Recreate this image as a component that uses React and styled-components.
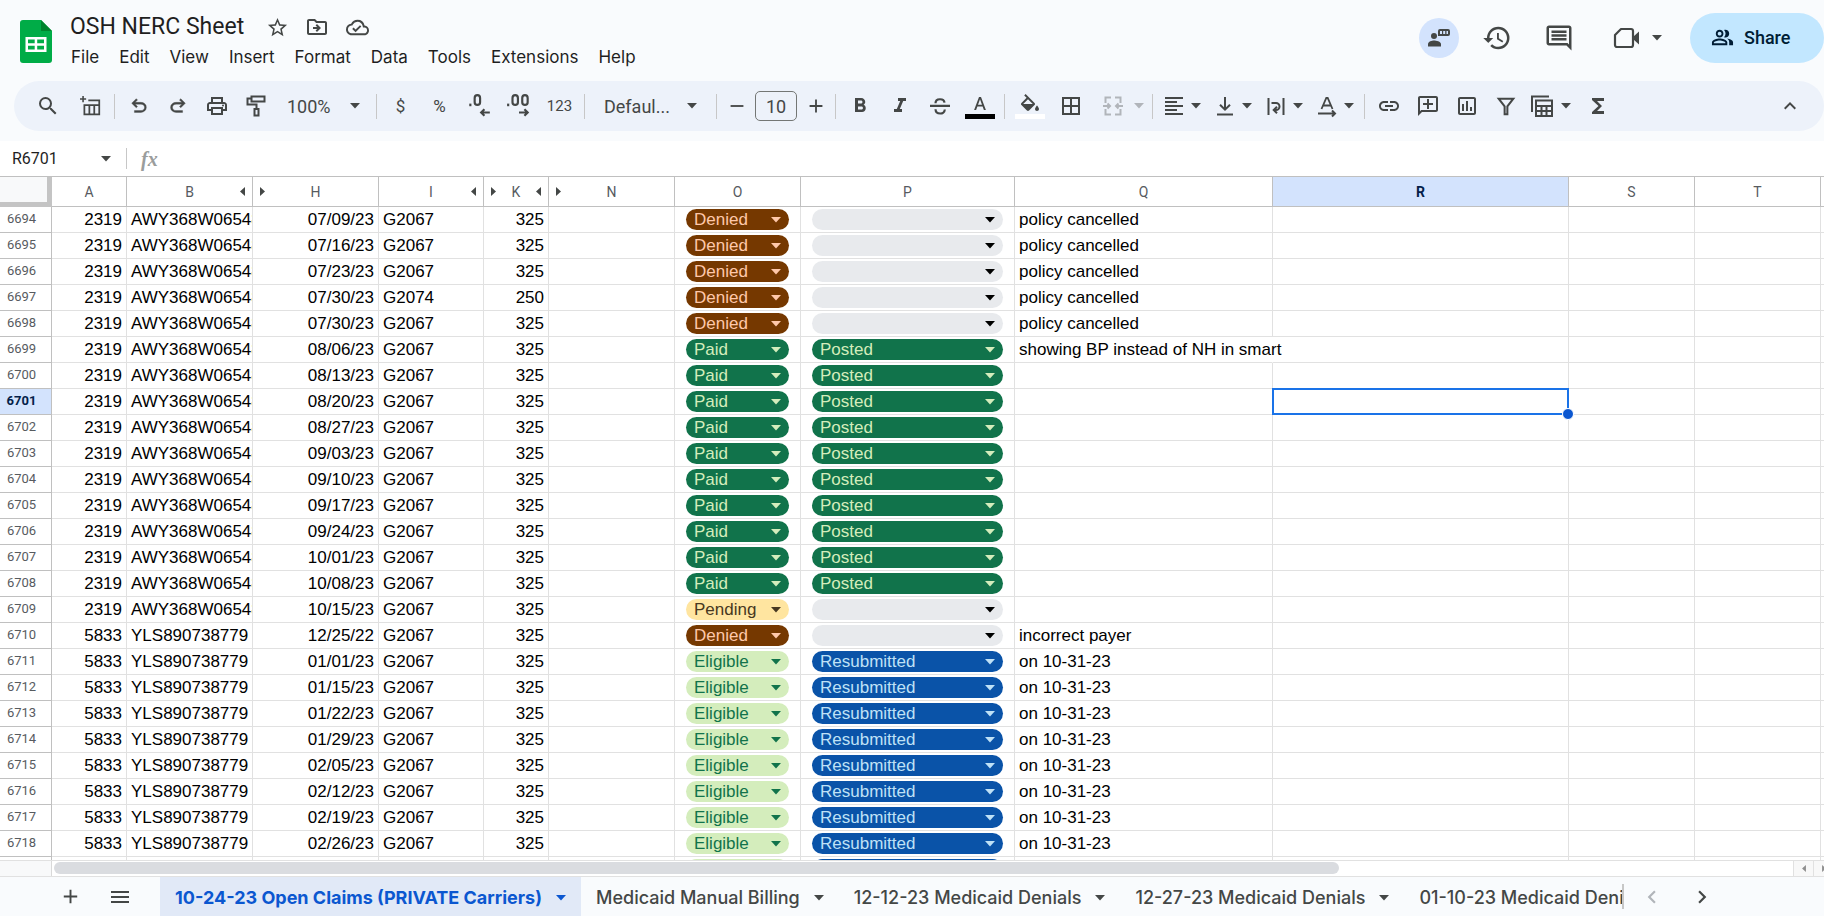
import React from "react";
import styled, { createGlobalStyle } from "styled-components";
import {
  MdStarBorder, MdOutlineDriveFileMove, MdOutlineCloudDone, MdHistory, MdOutlineComment,
  MdSearch, MdOutlinePrint, MdFormatBold, MdFormatItalic, MdBorderAll,
  MdFormatAlignLeft, MdLink, MdOutlineAddComment,
  MdOutlineInsertChart, MdFunctions, MdKeyboardArrowUp, MdAdd, MdRemove, MdMenu,
  MdChevronLeft, MdChevronRight, MdOutlinePeopleAlt,
} from "react-icons/md";

const ui = `Roboto, "Liberation Sans", sans-serif`;
const labelFont = `Inter, Roboto, sans-serif`;
const cellFont = `"Liberation Sans", Arial, sans-serif`;

const GlobalStyle = createGlobalStyle`
  *, *::before, *::after { box-sizing: border-box; }
  body { margin: 0; background: #f9fbfd; font-family: ${ui}; color: #1f1f1f; overflow: hidden; }
  button, input, select { font: inherit; color: inherit; border: 0; background: none; padding: 0; margin: 0; }
  button, select { cursor: pointer; }
  select { appearance: none; }
  svg { display: block; flex: none; }
`;

const Page = styled.div`
  display: flex;
  flex-direction: column;
  height: 100vh;
`;

/* ---------- document header ---------- */

const Header = styled.header`
  display: flex;
  align-items: flex-start;
  padding: 12px 0 0 20px;
  height: 81px;
`;
const LogoLink = styled.a`
  display: block;
  margin-top: 8px;
`;
const TitleArea = styled.div`
  flex: 1;
  min-width: 0;
  margin-left: 9px;
`;
const TitleRow = styled.div`
  display: flex;
  align-items: center;
  height: 30px;
  padding-left: 9px;
`;
const Title = styled.h1`
  margin: 0 13px 0 0;
  font-size: 23px;
  line-height: 28px;
  font-weight: 400;
  white-space: nowrap;
`;
const TitleButton = styled.button`
  display: grid;
  place-items: center;
  width: 40px;
  height: 30px;
  color: #444746;
`;
const MenuBar = styled.nav`
  display: flex;
  height: 30px;
`;
const MenuItem = styled.button`
  padding: 0 10px;
  font-family: ${labelFont};
  font-size: 17px;
  line-height: 30px;
`;
const Actions = styled.div`
  display: flex;
  align-items: center;
  height: 52px;
  color: #444746;
`;
const RoundButton = styled.button`
  display: grid;
  place-items: center;
  width: 40px;
  height: 40px;
  margin-right: ${(p) => p.$gap || 0}px;
  border-radius: 20px;
  background: ${(p) => (p.$active ? "#d3e3fd" : "transparent")};
`;
const CallButton = styled.button`
  display: flex;
  align-items: center;
  gap: 12px;
  height: 40px;
  margin-right: 28px;
`;
const ShareButton = styled.button`
  display: flex;
  align-items: center;
  gap: 10px;
  width: 134px;
  height: 50px;
  padding: 0 0 2px 21px;
  border-radius: 25px;
  background: #c2e7ff;
  color: #001d35;
  font-size: 18px;
  font-weight: 500;
`;

/* ---------- toolbar ---------- */

const Toolbar = styled.div`
  display: flex;
  align-items: center;
  flex: none;
  height: 50px;
  margin: 0 0 10px 14px;
  padding: 0 15px 0 14px;
  border-radius: 25px;
  background: #edf2fa;
  color: #444746;
`;
const Tool = styled.button`
  display: grid;
  place-items: center;
  flex: none;
  width: ${(p) => p.$w || 39}px;
  height: 38px;
  margin-right: ${(p) => p.$gap || 0}px;
  font-size: ${(p) => p.$size || 17}px;
`;
const Split = styled.button`
  display: flex;
  align-items: center;
  flex: none;
  gap: ${(p) => p.$gap || 5}px;
  width: ${(p) => p.$w || 51}px;
  height: 38px;
  padding-left: ${(p) => p.$start || 5}px;
  color: ${(p) => (p.$muted ? "#b1b5ba" : "inherit")};
`;
const Divider = styled.span`
  flex: none;
  width: 1px;
  height: ${(p) => p.$h || 25}px;
  margin: 0 ${(p) => p.$gap || 4}px;
  background: #c7c7c7;
`;
const SelectBox = styled.label`
  display: flex;
  align-items: center;
  flex: none;
  width: ${(p) => p.$w}px;
  padding: 0 ${(p) => p.$pad}px;
  font-size: 18px;
  select { flex: 1; min-width: 0; height: 38px; }
`;
const SizeInput = styled.input`
  flex: none;
  width: 42px;
  height: 30px;
  margin: 0 3px;
  border: 1px solid #747775;
  border-radius: 5px;
  text-align: center;
  font-size: 18px;
`;
const Swatched = styled.span`
  display: flex;
  flex-direction: column;
  align-items: center;
  gap: 2px;
  width: 30px;
  &::after {
    content: "";
    width: 30px;
    height: 5px;
    background: ${(p) => p.$color};
  }
`;
const Spacer = styled.span`
  flex: 1;
`;
const FlipX = styled.span`
  transform: scaleX(-1);
`;

/* ---------- formula bar ---------- */

const FormulaBar = styled.div`
  display: flex;
  align-items: center;
  flex: none;
  height: 35px;
  background: #fff;
`;
const NameBox = styled.input`
  width: 88px;
  padding-left: 12px;
  font-size: 16px;
`;
const NameMenu = styled.button`
  display: grid;
  place-items: center;
  width: 36px;
  height: 30px;
  padding-right: 1px;
  color: #444746;
`;
const FxMark = styled.span`
  width: 30px;
  margin-left: 12px;
  font: italic bold 20px/24px "Liberation Serif", serif;
  color: #9a9d9c;
`;
const FormulaInput = styled.input`
  flex: 1;
  height: 30px;
`;

/* ---------- grid ---------- */

const GridArea = styled.main`
  flex: 1;
  min-height: 0;
  overflow: hidden;
  border-top: 1px solid #c0c0c0;
  border-bottom: 1px solid #e1e1e1;
  background: #fff;
`;
const Sheet = styled.table`
  table-layout: fixed;
  width: 1950px;
  border-collapse: separate;
  border-spacing: 0;
`;
const ColHead = styled.th`
  height: 30px;
  padding: 0 7px;
  border-right: 1px solid #c0c0c0;
  border-bottom: 1px solid #c0c0c0;
  background: ${(p) => (p.$active ? "#d3e3fd" : "#fff")};
  color: ${(p) => (p.$active ? "#041e49" : "#575b5f")};
  font-size: 14px;
  font-weight: ${(p) => (p.$active ? 700 : 400)};
`;
const HeadInner = styled.span`
  display: grid;
  grid-template-columns: 1fr auto 1fr;
  align-items: center;
  & > :last-child { justify-self: end; }
`;
const Corner = styled.td`
  height: 30px;
  padding: 0;
  background: #f8f9fa;
  border-right: 5px solid #c4c4c4;
  border-bottom: 5px solid #c4c4c4;
`;
const RowHead = styled.th`
  height: 26px;
  padding: 0 8px 2px 0;
  border-right: 1px solid #c0c0c0;
  border-bottom: 1px solid #c0c0c0;
  background: ${(p) => (p.$active ? "#d3e3fd" : "#fff")};
  color: ${(p) => (p.$active ? "#041e49" : "#575b5f")};
  font-size: 13px;
  line-height: 16px;
  font-weight: ${(p) => (p.$active ? 700 : 400)};
`;
const Cell = styled.td`
  position: relative;
  height: 26px;
  padding: 1px 4px;
  border-right: 1px solid ${(p) => (p.$spill ? "transparent" : "#e1e1e1")};
  border-bottom: 1px solid #e1e1e1;
  overflow: ${(p) => (p.$spill || p.$open ? "visible" : "hidden")};
  color: #000;
  font-family: ${cellFont};
  font-size: 17px;
  line-height: 22px;
  text-align: ${(p) => (p.$right ? "right" : "left")};
  white-space: nowrap;
`;
const ChipCell = styled(Cell)`
  padding: 2px 11px;
`;
const Chip = styled.label`
  display: flex;
  align-items: center;
  height: 21px;
  padding: 0 8px;
  border-radius: 11px;
  background: ${(p) => p.$bg};
  color: ${(p) => p.$fg};
  select { flex: 1; min-width: 0; height: 21px; line-height: 21px; font-size: 17px; }
`;
const Selection = styled.span`
  position: absolute;
  inset: -1px;
  border: 2px solid #1a73e8;
  z-index: 1;
  &::after {
    content: "";
    position: absolute;
    right: -7px;
    bottom: -7px;
    width: 12px;
    height: 12px;
    border: 1px solid #fff;
    border-radius: 6px;
    background: #0b57d0;
  }
`;

/* ---------- scroll bar and sheet tabs ---------- */

const ScrollRow = styled.div`
  display: flex;
  flex: none;
  height: 16px;
  overflow: hidden;
  border-bottom: 1px solid #e1e1e1;
  background: #fff;
`;
const ScrollStub = styled.span`
  width: 52px;
  border-right: 1px solid #d9d9d9;
  background: #f8f9fa;
`;
const Track = styled.div`
  flex: 1;
  padding: 1px 2px;
`;
const Thumb = styled.div`
  width: 74%;
  height: 12px;
  border-radius: 6px;
  background: #dadce0;
`;
const ScrollButtons = styled.div`
  display: flex;
  margin-right: -9px;
`;
const ScrollButton = styled.button`
  display: grid;
  place-items: center;
  width: 20px;
  border-left: 1px solid #e1e1e1;
  background: #f8f8f8;
`;
const TabBar = styled.footer`
  display: flex;
  align-items: center;
  flex: none;
  height: 39px;
  padding-left: 45px;
  color: #444746;
`;
const BarButton = styled.button`
  display: grid;
  place-items: center;
  flex: none;
  width: 50px;
  height: 38px;
  color: ${(p) => (p.$muted ? "#b1b5ba" : "inherit")};
`;
const Tabs = styled.div`
  display: flex;
  flex: 1;
  min-width: 0;
  height: 39px;
  margin-left: 15px;
  overflow: hidden;
`;
const Tab = styled.button`
  display: flex;
  align-items: center;
  flex: none;
  gap: 14px;
  height: 39px;
  padding: 2px 15px 0;
  background: ${(p) => (p.$active ? "#e1e9f7" : "transparent")};
  color: ${(p) => (p.$active ? "#0b57d0" : "inherit")};
  font-family: ${labelFont};
  font-size: 18px;
  font-weight: ${(p) => (p.$active ? 700 : 500)};
  white-space: nowrap;
`;
const TabEdge = styled.span`
  width: 2px;
  height: 25px;
  background: #c7c7c7;
`;
const PagerArea = styled.div`
  display: flex;
  width: 200px;
  padding-left: 3px;
`;

/* ---------- drawings ---------- */

const Caret = () => (
  <svg width="10" height="6" viewBox="0 0 10 6" fill="currentColor" aria-hidden="true"><path d="M0 0h10L5 5.500z" /></svg>
);
const SideArrow = ({ left, w = 5, h = 9, fill = "#444746" }) => (
  <svg width={w} height={h} viewBox="0 0 5 9" fill={fill} aria-hidden="true">
    <path d={left ? "M5 0v9L0 4.500z" : "M0 0v9l5-4.500z"} />
  </svg>
);
const Svg = ({ s = 24, h = s, box = "0 0 24 24", children }) => (
  <svg width={s} height={h} viewBox={box} fill="currentColor" aria-hidden="true">{children}</svg>
);
const Line = ({ s = 24, w = 2, children }) => (
  <svg width={s} height={s} viewBox="0 0 24 24" fill="none" stroke="currentColor" strokeWidth={w} aria-hidden="true">{children}</svg>
);
const Logo = () => (
  <svg width="32" height="43" viewBox="0 0 32 43" aria-hidden="true">
    <path d="M3 0h18l11 11v29a3 3 0 0 1-3 3H3a3 3 0 0 1-3-3V3a3 3 0 0 1 3-3z" fill="#00ac47" />
    <path d="M21 0l11 11H21z" fill="#00832d" />
    <path d="M5.500 17v15h21V17zm2.500 2.500h6.700v3.700H8zm9.200 0H24v3.700h-6.800zM8 25.700h6.700v3.800H8zm9.200 0H24v3.800h-6.800z" fill="#fff" fillRule="evenodd" />
  </svg>
);
const UndoIcon = () => (
  <Svg s={22} box="0 -960 960 960"><path d="M280-200v-80h284q63 0 109.500-40T720-420q0-60-46.500-100T564-560H312l104 104-56 56-200-200 200-200 56 56-104 104h252q97 0 169.500 63T800-420q0 94-72.500 157T564-200H280Z" stroke="currentColor" strokeWidth="16" /></Svg>
);
const RedoIcon = () => (
  <Svg s={22} box="0 -960 960 960"><path d="M396-200q-97 0-169.500-63T154-420q0-94 72.500-157T396-640h252L544-744l56-56 200 200-200 200-56-56 104-104H396q-63 0-109.500 40T240-420q0 60 46.500 100T396-280h284v80H396Z" stroke="currentColor" strokeWidth="16" /></Svg>
);
const InsertTableIcon = () => (
  <Line s={21} w={2}><path d="M9.500 5H22v16H5V9.500M5 10.500h17M10.700 10.500V21M16.300 10.500V21" /><path d="M3.500 0v7M0 3.500h7" strokeWidth="1.800" /></Line>
);
const PaintIcon = () => (
  <Line s={24}><path d="M7.500 2.500h13v5h-13zM7.500 4.500H3.500v6h9v4.500M10.500 15h4v6.500h-4z" /></Line>
);
const StrikeIcon = () => (
  <Line s={24} w={2.200}><path d="M2 11.800h20M7.500 9.200C7.500 4 16 4 16.500 8.700M7.500 15.200c.3 5.600 9 5.800 9.300.3" /></Line>
);
const DecimalLess = () => (
  <Line s={26} w={2}><rect x="8" y="2" width="5" height="9" rx="2.500" /><path d="M3 11h2" strokeWidth="2.400" /><path d="M22 18h-8M17 15l-3 3 3 3" /></Line>
);
const DecimalMore = () => (
  <Line s={26} w={2}><rect x="6" y="2" width="5" height="9" rx="2.500" /><rect x="15" y="2" width="5" height="9" rx="2.500" /><path d="M1 11h2" strokeWidth="2.400" /><path d="M12 18h8M17 15l3 3-3 3" /></Line>
);
const MergeIcon = () => (
  <Line s={24}><path d="M10 3.500H4.500V9M14 3.500h5.500V9M4.500 15v5.500H10M19.500 15v5.500H14M2 12h7M6.500 9.500L9 12l-2.500 2.500M22 12h-7M17.500 9.500L15 12l2.500 2.500" /></Line>
);
const AlignBottomIcon = () => (
  <Line s={24}><path d="M12 3v12.500M7 10.700l5 5 5-5M4 20.500h16" /></Line>
);
const WrapIcon = () => (
  <Line s={24}><path d="M4.500 4v17M19.500 4v17M7.500 9H12a3.500 3.500 0 0 1 0 7h-1.500M13 12.700L9.700 16l3.300 3.300" /></Line>
);
const RotateIcon = () => (
  <Line s={24}><path d="M6.500 15L11.300 4h1.400l4.800 11M8.500 11.500h7" strokeWidth="1.800" /><path d="M3 19.500h17M17 16.500l3 3-3 3" /></Line>
);
const FilterIcon = () => (
  <Line s={22} w={2.2}><path d="M4 4h16l-6.500 8.500V21h-3v-8.500z" /></Line>
);
const TableViewsIcon = () => (
  <Line s={24}><path d="M2 18V2.500h17" /><path d="M6 6.500h16V22H6zM6 12h16M6 17h16M11.500 12v10M16.500 12v10" /></Line>
);
const BucketIcon = () => (
  <Svg h={18} box="0 0 24 18"><path d="M16.560 8.940L7.620 0 6.210 1.410l2.380 2.380-5.150 5.150c-.59.590-.59 1.540 0 2.120l5.500 5.500c.29.290.68.440 1.060.440s.77-.15 1.060-.44l5.500-5.500c.59-.58.59-1.530 0-2.120zM5.210 10L10 5.210 14.790 10H5.210zM19 11.500s-2 2.170-2 3.500c0 1.100.9 2 2 2s2-.9 2-2c0-1.330-2-3.500-2-3.500z" /></Svg>
);
const ColorAIcon = () => (
  <Svg h={18} box="0 0 24 18"><path d="M11 3h2l4.900 13h-2l-1.300-3.500H9.400L8.100 16h-2zM10 10.800h4L12 5.200z" /></Svg>
);
const PresentIcon = () => (
  <svg width="24" height="20" viewBox="0 0 24 20" fill="#444746" aria-hidden="true">
    <circle cx="7" cy="8" r="3" />
    <path d="M1 18.500v-2.500c0-2.500 4-3.500 6-3.500s7 1 7 3.500v2.500z" />
    <path d="M13 1h8a2 2 0 0 1 2 2v3a2 2 0 0 1-2 2H11V3a2 2 0 0 1 2-2zm0 2v3h2V3zm3.200 0v3h2V3zm3.300 0v3H21V3z" fillRule="evenodd" />
  </svg>
);
const MeetIcon = () => (
  <svg width="27" height="22" viewBox="0 0 27 22" fill="none" aria-hidden="true">
    <path d="M8 2h10a2 2 0 0 1 2 2v14a2 2 0 0 1-2 2H4a2 2 0 0 1-2-2V8z" stroke="#444746" strokeWidth="2.200" strokeLinejoin="round" />
    <path d="M20 10l6-5.500v13L20 12z" fill="#444746" />
  </svg>
);

/* ---------- data ---------- */

const menus = ["File", "Edit", "View", "Insert", "Format", "Data", "Tools", "Extensions", "Help"];

const columns = [
  { id: "A", w: 75 },
  { id: "B", w: 126, left: true },
  { id: "H", w: 126, right: true },
  { id: "I", w: 105, left: true },
  { id: "K", w: 65, left: true, right: true },
  { id: "N", w: 126, right: true },
  { id: "O", w: 126 },
  { id: "P", w: 214 },
  { id: "Q", w: 258 },
  { id: "R", w: 296 },
  { id: "S", w: 126 },
  { id: "T", w: 126 },
  { id: "", w: 129 },
];

const chipColors = {
  Denied: ["#753800", "#ffc8aa"],
  Paid: ["#11734b", "#d4edbc"],
  Posted: ["#11734b", "#d4edbc"],
  Pending: ["#ffe5a0", "#473821"],
  Eligible: ["#d4edbc", "#11734b"],
  Resubmitted: ["#0a53a8", "#bfe1f6"],
  "": ["#e8eaed", "#000000"],
};

const claim = (date, status, follow, note = "", code = "G2067", fee = 325) => ({ date, status, follow, note, code, fee });
const claims = [
  claim("07/09/23", "Denied", "", "policy cancelled"),
  claim("07/16/23", "Denied", "", "policy cancelled"),
  claim("07/23/23", "Denied", "", "policy cancelled"),
  claim("07/30/23", "Denied", "", "policy cancelled", "G2074", 250),
  claim("07/30/23", "Denied", "", "policy cancelled"),
  claim("08/06/23", "Paid", "Posted", "showing BP instead of NH in smart"),
  ...["08/13/23", "08/20/23", "08/27/23", "09/03/23", "09/10/23", "09/17/23", "09/24/23", "10/01/23", "10/08/23"].map((d) => claim(d, "Paid", "Posted")),
  claim("10/15/23", "Pending", ""),
  claim("12/25/22", "Denied", "", "incorrect payer"),
  ...["01/01/23", "01/15/23", "01/22/23", "01/29/23", "02/05/23", "02/12/23", "02/19/23", "02/26/23", "03/05/23"].map((d) => claim(d, "Eligible", "Resubmitted", "on 10-31-23")),
].map((c, i) => ({
  ...c,
  row: 6694 + i,
  client: i < 16 ? 2319 : 5833,
  member: i < 16 ? "AWY368W06548" : "YLS890738779",
}));

const sheetTabs = [
  "10-24-23 Open Claims (PRIVATE Carriers)",
  "Medicaid Manual Billing",
  "12-12-23 Medicaid Denials",
  "12-27-23 Medicaid Denials",
  "01-10-23 Medicaid Denials",
];

/* ---------- parts ---------- */

const StatusChip = ({ value, label }) => {
  const [bg, fg] = chipColors[value];
  return (
    <Chip $bg={bg} $fg={fg}>
      <select aria-label={label} defaultValue={value}><option value={value}>{value}</option></select>
      <Caret />
    </Chip>
  );
};

const ClaimRow = ({ c }) => {
  const active = c.row === 6701;
  return (
    <tr>
      <RowHead scope="row" $active={active}>{c.row}</RowHead>
      <Cell $right>{c.client}</Cell>
      <Cell>{c.member}</Cell>
      <Cell $right>{c.date}</Cell>
      <Cell>{c.code}</Cell>
      <Cell $right>{c.fee}</Cell>
      <Cell />
      <ChipCell><StatusChip value={c.status} label={`Status, row ${c.row}`} /></ChipCell>
      <ChipCell><StatusChip value={c.follow} label={`Follow-up, row ${c.row}`} /></ChipCell>
      <Cell $spill={c.note.length > 30}>{c.note}</Cell>
      <Cell $open={active}>{active && <Selection />}</Cell>
      <Cell /><Cell /><Cell />
    </tr>
  );
};

export default function App() {
  return (
    <Page>
      <GlobalStyle />
      <Header>
        <LogoLink href="#home" aria-label="Sheets home"><Logo /></LogoLink>
        <TitleArea>
          <TitleRow>
            <Title>OSH NERC Sheet</Title>
            <TitleButton aria-label="Star"><MdStarBorder size={23} /></TitleButton>
            <TitleButton aria-label="Move"><MdOutlineDriveFileMove size={24} /></TitleButton>
            <TitleButton aria-label="Saved to Drive"><MdOutlineCloudDone size={23} /></TitleButton>
          </TitleRow>
          <MenuBar>{menus.map((m) => <MenuItem key={m}>{m}</MenuItem>)}</MenuBar>
        </TitleArea>
        <Actions>
          <RoundButton $active $gap={18} aria-label="Present"><PresentIcon /></RoundButton>
          <RoundButton $gap={22} aria-label="History"><MdHistory size={30} /></RoundButton>
          <RoundButton $gap={34} aria-label="Comments"><MdOutlineComment size={30} /></RoundButton>
          <CallButton aria-label="Join a call"><MeetIcon /><Caret /></CallButton>
          <ShareButton><MdOutlinePeopleAlt size={23} />Share</ShareButton>
        </Actions>
      </Header>

      <Toolbar role="toolbar">
        <Tool $gap={4} aria-label="Search"><MdSearch size={24} /></Tool>
        <Tool aria-label="Insert table"><InsertTableIcon /></Tool>
        <Divider />
        <Tool aria-label="Undo"><UndoIcon /></Tool>
        <Tool aria-label="Redo"><RedoIcon /></Tool>
        <Tool aria-label="Print"><MdOutlinePrint size={24} /></Tool>
        <Tool aria-label="Paint format"><PaintIcon /></Tool>
        <SelectBox $w={97} $pad={12}>
          <select aria-label="Zoom"><option>100%</option></select><Caret />
        </SelectBox>
        <Divider />
        <Tool aria-label="Currency">$</Tool>
        <Tool aria-label="Percent">%</Tool>
        <Tool $w={40} aria-label="Decrease decimals"><DecimalLess /></Tool>
        <Tool $w={40} aria-label="Increase decimals"><DecimalMore /></Tool>
        <Tool $w={41} $size={15} aria-label="More formats">123</Tool>
        <Divider />
        <SelectBox $w={123} $pad={15}>
          <select aria-label="Font"><option>Defaul...</option></select><Caret />
        </SelectBox>
        <Divider />
        <Tool $w={31} aria-label="Smaller"><MdRemove size={22} /></Tool>
        <SizeInput aria-label="Font size" defaultValue="10" />
        <Tool $w={31} aria-label="Larger"><MdAdd size={22} /></Tool>
        <Divider />
        <Tool $w={40} aria-label="Bold"><MdFormatBold size={24} /></Tool>
        <Tool $w={40} aria-label="Italic"><MdFormatItalic size={24} /></Tool>
        <Tool $w={40} aria-label="Strikethrough"><StrikeIcon /></Tool>
        <Tool $w={40} aria-label="Text color"><Swatched $color="#000"><ColorAIcon /></Swatched></Tool>
        <Divider />
        <Tool $w={41} aria-label="Fill color"><Swatched $color="#fff"><BucketIcon /></Swatched></Tool>
        <Tool $w={41} aria-label="Borders"><MdBorderAll size={24} /></Tool>
        <Split $w={57} $gap={9} $start={10} $muted aria-label="Merge cells"><MergeIcon /><Caret /></Split>
        <Divider />
        <Split aria-label="Horizontal align"><MdFormatAlignLeft size={24} /><Caret /></Split>
        <Split aria-label="Vertical align"><AlignBottomIcon /><Caret /></Split>
        <Split aria-label="Wrapping"><WrapIcon /><Caret /></Split>
        <Split $w={50} aria-label="Rotation"><RotateIcon /><Caret /></Split>
        <Divider />
        <Tool aria-label="Link"><MdLink size={24} /></Tool>
        <Tool aria-label="Comment"><FlipX><MdOutlineAddComment size={24} /></FlipX></Tool>
        <Tool aria-label="Chart"><MdOutlineInsertChart size={24} /></Tool>
        <Tool aria-label="Filter"><FilterIcon /></Tool>
        <Split $w={53} $gap={7} aria-label="Filter views"><TableViewsIcon /><Caret /></Split>
        <Tool aria-label="Functions"><MdFunctions size={24} /></Tool>
        <Spacer />
        <Tool aria-label="Hide menus"><MdKeyboardArrowUp size={24} /></Tool>
      </Toolbar>

      <FormulaBar>
        <NameBox aria-label="Name box" defaultValue="R6701" />
        <NameMenu aria-label="Named ranges"><Caret /></NameMenu>
        <Divider $h={21} $gap={2} />
        <FxMark>fx</FxMark>
        <FormulaInput aria-label="Formula" />
      </FormulaBar>

      <GridArea>
        <Sheet>
          <colgroup>
            <col style={{ width: 52 }} />
            {columns.map((c) => <col key={c.id} style={{ width: c.w }} />)}
          </colgroup>
          <thead>
            <tr>
              <Corner />
              {columns.map((c) => (
                <ColHead key={c.id} scope="col" $active={c.id === "R"}>
                  <HeadInner>
                    <span>{c.right && <SideArrow />}</span>
                    <span>{c.id}</span>
                    <span>{c.left && <SideArrow left />}</span>
                  </HeadInner>
                </ColHead>
              ))}
            </tr>
          </thead>
          <tbody>{claims.map((c) => <ClaimRow key={c.row} c={c} />)}</tbody>
        </Sheet>
      </GridArea>

      <ScrollRow>
        <ScrollStub />
        <Track><Thumb /></Track>
        <ScrollButtons>
          <ScrollButton aria-label="Scroll left"><SideArrow left w={4} h={7} fill="#8f8f8f" /></ScrollButton>
          <ScrollButton aria-label="Scroll right"><SideArrow w={4} h={7} fill="#8f8f8f" /></ScrollButton>
        </ScrollButtons>
      </ScrollRow>
      <TabBar>
        <BarButton aria-label="Add sheet"><MdAdd size={23} /></BarButton>
        <BarButton aria-label="All sheets"><MdMenu size={24} /></BarButton>
        <Tabs>
          {sheetTabs.map((t, i) => <Tab key={t} $active={i === 0}>{t}<Caret /></Tab>)}
        </Tabs>
        <TabEdge />
        <PagerArea>
          <BarButton $muted aria-label="Previous tabs"><MdChevronLeft size={26} /></BarButton>
          <BarButton aria-label="Next tabs"><MdChevronRight size={26} /></BarButton>
        </PagerArea>
      </TabBar>
    </Page>
  );
}
